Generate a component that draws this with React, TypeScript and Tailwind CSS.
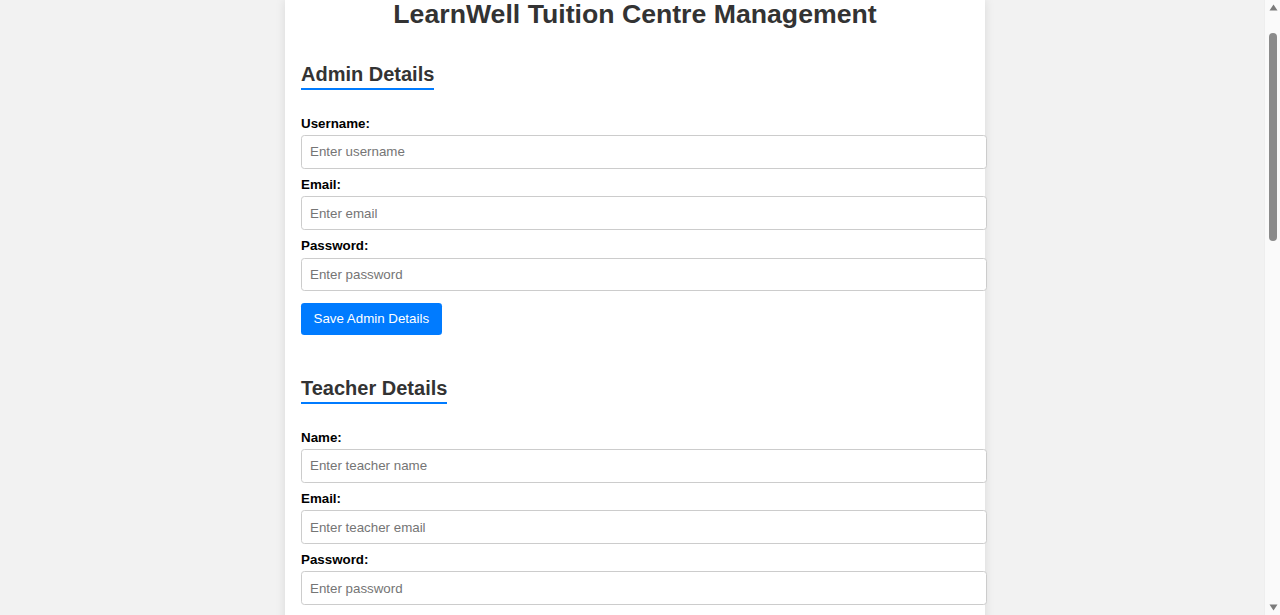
import React from "react";

function Field({ label, placeholder, type = "text" }: { label: string; placeholder: string; type?: string }) {
  return (
    <>
      <label className="block text-[13.33px] leading-[15.33px] font-bold text-black mb-[4.17px]">{label}</label>
      <input
        type={type}
        placeholder={placeholder}
        className="block box-border w-[686px] h-[33.33px] px-[8px] border border-[#cccccc] rounded-[3.33px] bg-white text-[13.33px] text-black mb-[8.33px] placeholder:text-[#757575] outline-none"
      />
    </>
  );
}

function Heading({ children, mt }: { children: React.ReactNode; mt: string }) {
  return (
    <div className={`flex ${mt} mb-[25.4px]`}>
      <h2 className="text-[20px] leading-[23px] font-bold text-[#333333] pb-[2.5px] border-b-2 border-[#007bff]">
        {children}
      </h2>
    </div>
  );
}

function Button({ children }: { children: React.ReactNode }) {
  return (
    <button className="block mt-[12.5px] h-[31.67px] px-[12.5px] bg-[#007bff] text-white text-[13.33px] rounded-[3.33px] cursor-pointer">
      {children}
    </button>
  );
}

function Scrollbar() {
  return (
    <div className="sticky top-0 self-start h-screen w-[16px] shrink-0 bg-[#fafafa] border-l border-[#eeeeee] flex flex-col items-center">
      <svg width="9" height="7" viewBox="0 0 9 7" className="mt-[4px] ml-[1px]">
        <path d="M4.5 0.5 L8.5 6.5 L0.5 6.5 Z" fill="#7b7b7b" />
      </svg>
      <div className="mt-[22px] ml-[1px] w-[8px] h-[208px] rounded-[4px] bg-[#8b8b8b]" />
      <div className="flex-1" />
      <svg width="9" height="7" viewBox="0 0 9 7" className="mb-[4px] ml-[1px]">
        <path d="M0.5 0.5 L8.5 0.5 L4.5 6.5 Z" fill="#7b7b7b" />
      </svg>
    </div>
  );
}

export default function App() {
  return (
    <div className="min-h-screen bg-[#f2f2f2] flex font-['Liberation_Sans',Arial,sans-serif]">
      <div className="flex-1 flex justify-center pl-[6px]">
        <div className="w-[700px] bg-white px-[16px] pb-[40px] shadow-[0_0_10px_rgba(0,0,0,0.1)]">
          <h1 className="text-center text-[26.67px] leading-[28px] font-bold text-[#333333]">
            LearnWell Tuition Centre Management
          </h1>

          <section>
            <Heading mt="mt-[34.9px]">Admin Details</Heading>
            <Field label="Username:" placeholder="Enter username" />
            <Field label="Email:" placeholder="Enter email" type="email" />
            <Field label="Password:" placeholder="Enter password" type="password" />
            <Button>Save Admin Details</Button>
          </section>

          <section>
            <Heading mt="mt-[41.8px]">Teacher Details</Heading>
            <Field label="Name:" placeholder="Enter teacher name" />
            <Field label="Email:" placeholder="Enter teacher email" type="email" />
            <Field label="Password:" placeholder="Enter password" type="password" />
            <Field label="Subject:" placeholder="Enter subject" />
            <Button>Save Teacher Details</Button>
          </section>

          <section>
            <Heading mt="mt-[41.8px]">Student Details</Heading>
            <Field label="Name:" placeholder="Enter student name" />
            <Field label="Email:" placeholder="Enter student email" type="email" />
            <Field label="Grade:" placeholder="Enter grade" />
            <Field label="Parent Contact:" placeholder="Enter parent contact" />
            <Button>Save Student Details</Button>
          </section>

          <section>
            <Heading mt="mt-[41.8px]">Class Schedule</Heading>
            <Field label="Class Name:" placeholder="Enter class name" />
            <Field label="Teacher:" placeholder="Enter teacher name" />
            <Field label="Time:" placeholder="Enter class time" />
            <Button>Save Schedule</Button>
          </section>
        </div>
      </div>
      <Scrollbar />
    </div>
  );
}
